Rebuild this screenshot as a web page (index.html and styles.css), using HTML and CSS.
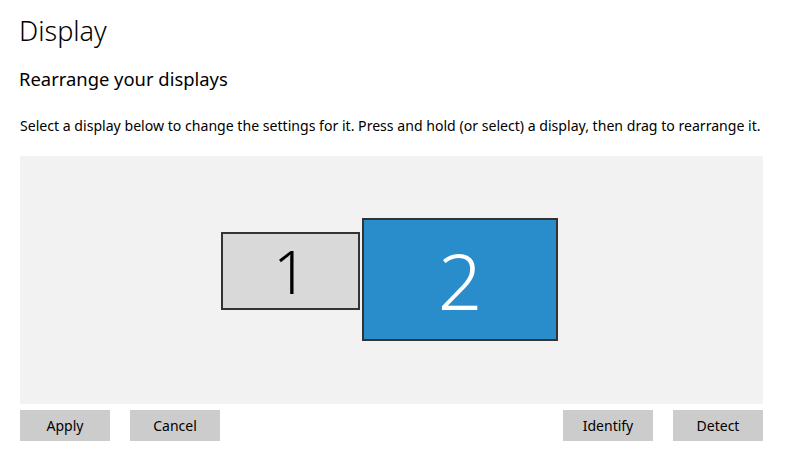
FILE: index.html
```html
<!DOCTYPE html>
<html lang="en">
<head>
  <meta charset="UTF-8" />
  <title>Display</title>
  <link rel="stylesheet" href="styles.css">
</head>
<body>
  <div class="page">
    <!-- 제목 -->
    <h1 class="title">Display</h1>
    <h2 class="subtitle">Rearrange your displays</h2>
    <p class="hint">Select a display below to change the settings for it. Press and hold (or select) a display, then drag to rearrange it.</p>

    <!-- 모니터 배치 영역 -->
    <div class="arrange">
      <div class="monitor monitor-1">1</div>
      <div class="monitor monitor-2 selected">2</div>
    </div>

    <!-- 버튼 -->
    <div class="actions">
      <div class="group">
        <button class="btn">Apply</button>
        <button class="btn">Cancel</button>
      </div>
      <div class="group">
        <button class="btn">Identify</button>
        <button class="btn">Detect</button>
      </div>
    </div>
  </div>
</body>
</html>
```

FILE: styles.css
```css
/* ─── 기본 ─── */
body {
  margin: 0;
  background-color: #ffffff;
  font-family: 'Noto Sans', 'Open Sans', sans-serif;
  color: #000000;
}

.page {
  padding: 0 23px 0 20px;
}

/* 제목 */
.title {
  margin: 0;
  padding-top: 13px;
  font-size: 27px;
  font-weight: 300;
  line-height: 36px;
  margin-left: -1px;
}

.subtitle {
  margin: 18px 0 0 -1px;
  font-size: 18.4px;
  font-weight: 400;
  line-height: 24px;
}

.hint {
  margin: 25px 0 0;
  font-size: 14.1px;
  line-height: 20px;
  white-space: nowrap;
}

/* 모니터 배치 영역 */
.arrange {
  position: relative;
  margin-top: 20px;
  height: 248px;
  background-color: #f2f2f2;
}

.monitor {
  position: absolute;
  box-sizing: border-box;
  border: 2px solid #333333;
  display: flex;
  justify-content: center;
  align-items: center;
  font-weight: 300;
}

.monitor-1 {
  left: 201px;
  top: 76px;
  width: 139px;
  height: 78px;
  background-color: #d9d9d9;
  font-size: 60px;
}

.monitor-2 {
  left: 342px;
  top: 62px;
  width: 196px;
  height: 123px;
  background-color: #2a8dcb;
  color: #ffffff;
  font-size: 78px;
}

/* 버튼 */
.actions {
  display: flex;
  justify-content: space-between;
  margin-top: 6px;
}

.group {
  display: flex;
  gap: 20px;
}

.btn {
  width: 90px;
  height: 31px;
  border: none;
  padding: 0;
  background-color: #cccccc;
  font-family: inherit;
  font-size: 14px;
  color: #000000;
}
```
